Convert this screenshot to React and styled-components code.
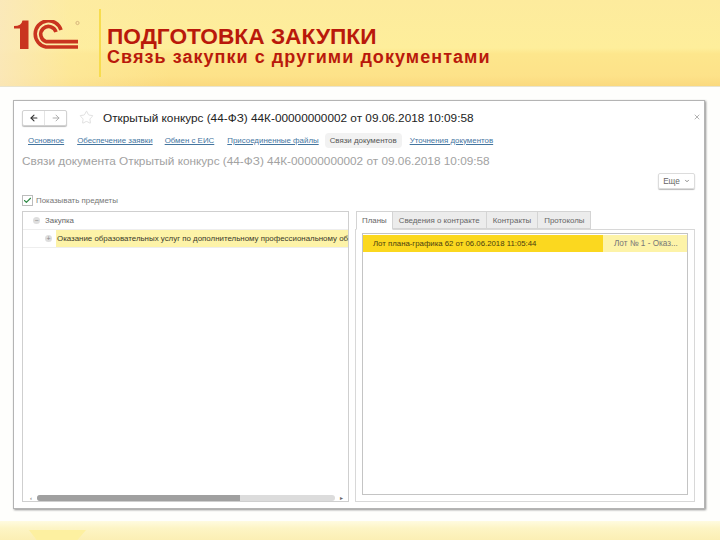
import React from 'react';
import styled, { createGlobalStyle } from 'styled-components';
import { ArrowLeft, ArrowRight, Star, X, Check, ChevronDown } from 'lucide-react';

const GlobalStyle = createGlobalStyle`
  html, body { margin: 0; padding: 0; background: #fff; }
  body { font-family: "Liberation Sans", Arial, sans-serif; }
`;

const Page = styled.div`
  width: 720px;
  height: 540px;
  overflow: hidden;
  display: flex;
  flex-direction: column;
  background: #fefefc;
`;

const Header = styled.header`
  height: 87px;
  flex: none;
  display: flex;
  align-items: stretch;
  padding: 9px 0 0 14px;
  box-sizing: border-box;
  border-bottom: 1px solid #e8e4d0;
  background:
    linear-gradient(90deg, rgba(250, 232, 190, 0.85) 0, rgba(253, 236, 165, 0.5) 70px, rgba(254, 236, 150, 0) 170px),
    linear-gradient(180deg, #fdeb9d 0, #feee9b 48px, #fde68c 54px, #fde289 76px, #fad97e 86px);
`;

const LogoBox = styled.div`
  width: 85px;
  flex: none;
  padding-top: 11px;
`;

const Divider = styled.div`
  width: 2px;
  height: 68px;
  flex: none;
  background: #f7dc4e;
`;

const Titles = styled.div`
  padding: 15px 0 0 6px;
  color: #b9190b;
`;

const Title = styled.h1`
  margin: 0;
  font-size: 22.7px;
  line-height: 24px;
  font-weight: 700;
  white-space: nowrap;
`;

const Subtitle = styled.h2`
  margin: 0;
  font-size: 18px;
  line-height: 18px;
  font-weight: 700;
  letter-spacing: 1.05px;
  white-space: nowrap;
`;

const Main = styled.main`
  flex: 1;
  padding: 13px 15px 12px 13px;
  display: flex;
  min-height: 0;
`;

const Window = styled.section`
  flex: 1;
  box-sizing: border-box;
  display: flex;
  flex-direction: column;
  background: #fff;
  border: 1px solid #b4b4b4;
  box-shadow: 1px 1px 2px #8f8f8f;
  padding: 8px 9px 6px 8px;
  color: #333;
`;

const Toolbar = styled.div`
  display: flex;
  align-items: center;
  height: 17px;
`;

const NavGroup = styled.div`
  display: flex;
  width: 45px;
  height: 16px;
  box-sizing: border-box;
  border: 1px solid #d2d2d2;
  border-radius: 2px;
  box-shadow: 0 1px 1px #bbb;
  background: #fff;
`;

const NavButton = styled.div`
  flex: 1;
  display: flex;
  align-items: center;
  justify-content: center;
  color: ${(p) => (p.$off ? '#a5a5a5' : '#333')};
  border-left: ${(p) => (p.$off ? '1px solid #e4e4e4' : 'none')};
`;

const StarBox = styled.div`
  margin: 0 9px 0 12px;
  display: flex;
  color: #d6d6d6;
`;

const WindowTitle = styled.div`
  flex: 1;
  font-size: 11.8px;
  color: #222;
  white-space: nowrap;
`;

const CloseBox = styled.div`
  display: flex;
  color: #8c8c8c;
  margin-right: -6px;
  margin-bottom: 2px;
`;

const TabLinks = styled.nav`
  display: flex;
  align-items: center;
  height: 20px;
  margin-top: 4px;
  padding-left: 6px;
`;

const TabLink = styled.a`
  font-size: 7.9px;
  white-space: nowrap;
  color: ${(p) => (p.$active ? '#555' : '#44759f')};
  text-decoration: ${(p) => (p.$active ? 'none' : 'underline')};
  background: ${(p) => (p.$active ? '#f2f2f2' : 'transparent')};
  border-radius: 4px;
  padding: ${(p) => (p.$active ? '3px 5px' : '0')};
  margin-right: ${(p) => p.$gap}px;
`;

const DocHeading = styled.div`
  font-size: 11.8px;
  color: #a2a2a2;
  white-space: nowrap;
  margin-top: 4px;
  height: 14px;
  line-height: 14px;
`;

const MoreRow = styled.div`
  display: flex;
  justify-content: flex-end;
  margin-top: 5px;
  height: 16px;
`;

const MoreButton = styled.div`
  width: 37px;
  box-sizing: border-box;
  display: flex;
  align-items: center;
  justify-content: center;
  gap: 4px;
  font-size: 8.2px;
  color: #666;
  border: 1px solid #dcdcdc;
  border-radius: 2px;
  box-shadow: 0 1px 1px #bbb;
`;

const CheckRow = styled.label`
  display: flex;
  align-items: center;
  gap: 3px;
  height: 11px;
  margin-top: 6px;
  font-size: 7.9px;
  color: #777;
`;

const CheckBox = styled.span`
  width: 9px;
  height: 9px;
  border: 1px solid #bcbcbc;
  display: flex;
  align-items: center;
  justify-content: center;
  color: #2f8a45;
`;

const Panels = styled.div`
  flex: 1;
  min-height: 0;
  margin-top: 5px;
  display: grid;
  grid-template-columns: 327px 340px;
  column-gap: 6px;
`;

const LeftPanel = styled.div`
  border: 1px solid #cfcfcf;
  display: flex;
  flex-direction: column;
`;

const TreeRow = styled.div`
  height: 18px;
  flex: none;
  box-sizing: border-box;
  display: flex;
  align-items: center;
  border-bottom: 1px solid #eee;
  padding-left: ${(p) => p.$indent}px;
  font-size: 7.9px;
  color: #666;
  white-space: nowrap;
`;

const TreeMark = styled.span`
  width: 7px;
  height: 7px;
  flex: none;
  margin-right: ${(p) => p.$gap}px;
  border-radius: 50%;
  background: #dedede;
  display: flex;
  align-items: center;
  justify-content: center;
  font-size: 7px;
  line-height: 7px;
  color: #888;
`;

const Highlight = styled.span`
  flex: 1;
  height: 100%;
  display: flex;
  align-items: center;
  padding-left: 1px;
  background: #fdf3a8;
  color: #3a3a2a;
  font-size: 7.9px;
`;

const Scrollbar = styled.div`
  margin-top: auto;
  display: flex;
  align-items: center;
  height: 7px;
  padding: 0 5px 0 7px;
  gap: 5px;
  font-size: 6px;
  color: #666;
`;

const ScrollTrack = styled.div`
  flex: 1;
  height: 6px;
  border-radius: 3px;
  background: #dcdcdc;
  overflow: hidden;
`;

const ScrollThumb = styled.div`
  width: ${(p) => p.$share}%;
  height: 100%;
  background: #a0a0a0;
`;

const RightPanel = styled.div`
  display: flex;
  flex-direction: column;
  min-width: 0;
`;

const Tabs = styled.div`
  display: flex;
  height: 18px;
  flex: none;
  margin-left: 1px;
`;

const Tab = styled.div`
  box-sizing: border-box;
  height: ${(p) => (p.$active ? '19px' : '18px')};
  display: flex;
  align-items: center;
  padding: 0 ${(p) => p.$pad}px;
  font-size: 7.9px;
  white-space: nowrap;
  color: #666;
  background: ${(p) => (p.$active ? '#fff' : '#ececec')};
  border: 1px solid #d4d4d4;
  border-left-width: ${(p) => (p.$active ? '1px' : '0')};
  border-bottom-color: ${(p) => (p.$active ? '#fff' : '#d4d4d4')};
  position: relative;
  z-index: 1;
`;

const TabFrame = styled.div`
  flex: 1;
  display: flex;
  min-width: 0;
  border: 1px solid #d8d8d8;
  padding: 3px 6px 6px 6px;
`;

const TabBody = styled.div`
  flex: 1;
  min-width: 0;
  border: 1px solid #c4c4c4;
  padding-top: 1px;
`;

const PlanRow = styled.div`
  height: 17px;
  display: flex;
  white-space: nowrap;
`;

const PlanCell = styled.div`
  display: flex;
  align-items: center;
  box-sizing: border-box;
  width: ${(p) => p.$width}px;
  padding-left: ${(p) => p.$pad}px;
  background: ${(p) => p.$bg};
  color: ${(p) => p.$color};
  font-size: ${(p) => p.$size}px;
`;

const Footer = styled.footer`
  height: 19px;
  flex: none;
  position: relative;
  overflow: hidden;
  background: linear-gradient(180deg, #fffbe0 0, #fdf4c4 40%, #fbefb4 100%);
`;

const FooterMark = styled.div`
  position: absolute;
  left: 29px;
  top: 9px;
  width: 57px;
  height: 12px;
  background: #fdf0a0;
  clip-path: polygon(0 0, 100% 0, 82% 100%, 16% 100%);
`;

function Logo() {
  return (
    <svg width="68" height="32" viewBox="0 0 68 32" fill="none">
      <path d="M0 8.5 L6 8.5 L6 29 L14.5 29 L14.5 0.5 L8.5 0.5 Q7.5 6 0 6 Z" fill="#c9341f" />
      <path d="M47 10 A13.2 13.2 0 1 0 32 27 L64 27" stroke="#c9341f" stroke-width="3.6" />
      <path d="M42 12 A7.8 7.8 0 1 0 32 21.6 L64 21.6" stroke="#c9341f" stroke-width="3.6" />
      <circle cx="63.5" cy="3" r="1.6" stroke="#c9a070" stroke-width="0.7" />
    </svg>
  );
}

export default function App() {
  return (
    <Page>
      <GlobalStyle />
      <Header>
        <LogoBox><Logo /></LogoBox>
        <Divider />
        <Titles>
          <Title>ПОДГОТОВКА ЗАКУПКИ</Title>
          <Subtitle>Связь закупки с другими документами</Subtitle>
        </Titles>
      </Header>
      <Main>
        <Window>
          <Toolbar>
            <NavGroup>
              <NavButton><ArrowLeft size={10} strokeWidth={2.6} /></NavButton>
              <NavButton $off><ArrowRight size={10} strokeWidth={2.2} /></NavButton>
            </NavGroup>
            <StarBox><Star size={15} strokeWidth={1.2} /></StarBox>
            <WindowTitle>Открытый конкурс (44-ФЗ) 44К-00000000002 от 09.06.2018 10:09:58</WindowTitle>
            <CloseBox><X size={8} strokeWidth={2} /></CloseBox>
          </Toolbar>
          <TabLinks>
            <TabLink $gap={13}>Основное</TabLink>
            <TabLink $gap={12}>Обеспечение заявки</TabLink>
            <TabLink $gap={13}>Обмен с ЕИС</TabLink>
            <TabLink $gap={6}>Присоединенные файлы</TabLink>
            <TabLink $active $gap={8}>Связи документов</TabLink>
            <TabLink $gap={0}>Уточнения документов</TabLink>
          </TabLinks>
          <DocHeading>Связи документа Открытый конкурс (44-ФЗ) 44К-00000000002 от 09.06.2018 10:09:58</DocHeading>
          <MoreRow>
            <MoreButton>Еще <ChevronDown size={6} strokeWidth={3} /></MoreButton>
          </MoreRow>
          <CheckRow>
            <CheckBox><Check size={11} strokeWidth={3} /></CheckBox>
            Показывать предметы
          </CheckRow>
          <Panels>
            <LeftPanel>
              <TreeRow $indent={10}>
                <TreeMark $gap={5}>−</TreeMark>
                Закупка
              </TreeRow>
              <TreeRow $indent={22}>
                <TreeMark $gap={4}>+</TreeMark>
                <Highlight>Оказание образовательных услуг по дополнительному профессиональному об</Highlight>
              </TreeRow>
              <Scrollbar>
                <span>‹</span>
                <ScrollTrack><ScrollThumb $share={68} /></ScrollTrack>
                <span>▸</span>
              </Scrollbar>
            </LeftPanel>
            <RightPanel>
              <Tabs>
                <Tab $active $pad={5}>Планы</Tab>
                <Tab $pad={6}>Сведения о контракте</Tab>
                <Tab $pad={6}>Контракты</Tab>
                <Tab $pad={6}>Протоколы</Tab>
              </Tabs>
              <TabFrame>
                <TabBody>
                  <PlanRow>
                    <PlanCell $width={240} $pad={10} $size={7.8} $bg="#fbd81f" $color="#4a3d10">Лот плана-графика 62 от 06.06.2018 11:05:44</PlanCell>
                    <PlanCell $width={84} $pad={11} $size={8.2} $bg="#fdf3a8" $color="#777">Лот № 1 - Оказ...</PlanCell>
                  </PlanRow>
                </TabBody>
              </TabFrame>
            </RightPanel>
          </Panels>
        </Window>
      </Main>
      <Footer><FooterMark /></Footer>
    </Page>
  );
}
